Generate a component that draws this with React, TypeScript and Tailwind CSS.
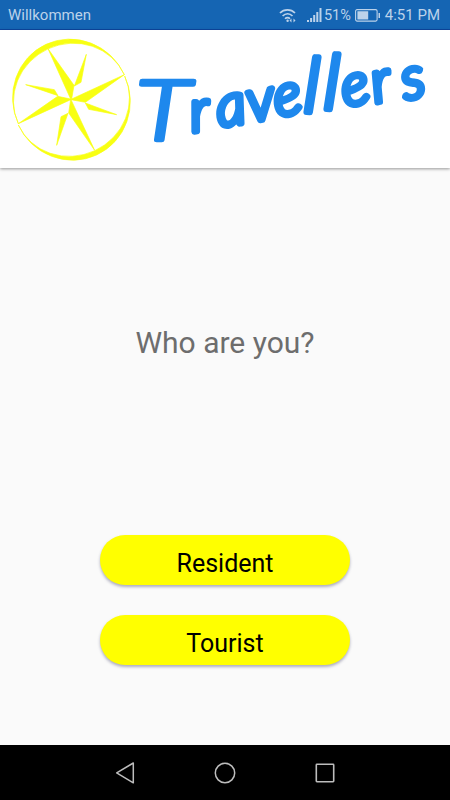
const roles = ["Resident", "Tourist"];

function StatusBar() {
    return (
        <div className="flex h-[30px] items-center border-b border-[#0d47a1] bg-[#1565b3] pt-[2px] pl-2 pr-[10px] text-[15px] text-[#bcd2ea]">
            <span className="mr-auto">Willkommen</span>
            <svg className="mr-[10px] mt-px" width="18" height="16" viewBox="0 0 18 16" fill="none" stroke="currentColor">
                <path d="M1 5C5 .8 12 .8 16 5" strokeWidth="1.7" />
                <path d="M3.6 8C6.5 5 10.8 5 13.5 8" strokeWidth="1.7" />
                <path d="M6 10.8C7.6 9.2 9.5 9.2 11 10.8" strokeWidth="1.6" />
                <circle cx="8.6" cy="12.8" r="1.2" fill="currentColor" stroke="none" />
                <path d="M10.5 12.5l2-2v4zM16.5 12.5l-2-2v4z" fill="currentColor" stroke="none" />
            </svg>
            <svg className="mr-[2px]" width="15" height="15" viewBox="0 0 15 15" fill="currentColor">
                <path d="M0 12h2v2H0zM3.1 10h2v4h-2zM6.2 7h2v7h-2zM9.3 4h2v10h-2zM12.5 0h2v14h-2z" />
            </svg>
            <span className="text-[14.5px]">51%</span>
            <svg className="ml-[4px] mr-[4px]" width="26" height="13" viewBox="0 0 26 13" fill="none">
                <rect x=".6" y=".6" width="21.5" height="11.5" rx="1.5" stroke="currentColor" strokeWidth="1.1" />
                <path d="M2.4 2.2h10.8v8.4H2.4zM23.5 4h1.5v5h-1.5z" fill="currentColor" />
            </svg>
            <span>4:51 PM</span>
        </div>
    );
}

function Compass() {
    return (
        <svg width="135" height="138" viewBox="0 0 405 414" fill="#f8ff12" stroke="#f8ff12" strokeWidth="2" strokeLinejoin="round">
            {/* two crescents form the ring */}
            <path d="M373 134A100 103.5 -24.8 0 0 55 281A100 95 -24.8 0 1 373 134Z" />
            <path d="M55 285A100 102.5 -24.8 0 0 374 138A100 94.5 -24.8 0 1 55 285Z" />
            <path d="M144 56L222 166L215 207L373 134L256 217L213 209L284 361L206 249L212 209L55 281L173 199L212 207Z" />
            <path d="M259 73L243 157L223 168ZM77 164L163 179L174 197ZM256 219L350 254L266 238ZM183 260L204 250L170 346Z" />
        </svg>
    );
}

function Wordmark() {
    return (
        <svg
            width="315"
            height="138"
            viewBox="135 30 315 138"
            className="font-['Lato','Liberation_Sans',sans-serif] font-light italic"
            fill="#1e88ed"
            stroke="#1e88ed"
            strokeWidth="6"
            strokeLinejoin="round"
            strokeLinecap="round"
        >
            <text fontSize="59">
                <tspan x="136" y="140" fontSize="82" strokeWidth="4.5" textLength="54" lengthAdjust="spacingAndGlyphs">T</tspan>
                <tspan
                    x="192 219 250 277"
                    y="132 127 122 117"
                    rotate="-7 -9 -10 -11"
                >rave</tspan>
                <tspan x="303 323" y="112 109" rotate="2 2" fontSize="76">ll</tspan>
                <tspan x="345 375 405" y="107 103 100" rotate="-12 -12 -12">ers</tspan>
            </text>
        </svg>
    );
}

function NavBar() {
    return (
        <div className="flex h-[55px] items-center justify-center gap-[76px] bg-black text-[#bdbdbd]">
            <svg width="24" height="24" viewBox="0 0 24 24" fill="none" stroke="currentColor" strokeWidth="1.5" strokeLinejoin="round">
                <path d="M20.3 2L3.7 11.9L20.3 21.8Z" />
            </svg>
            <svg width="24" height="24" viewBox="0 0 24 24" fill="none" stroke="currentColor" strokeWidth="1.5">
                <circle cx="12" cy="12" r="9.7" />
            </svg>
            <svg width="24" height="24" viewBox="0 0 24 24" fill="none" stroke="currentColor" strokeWidth="1.6">
                <rect x="3.3" y="3.3" width="17.4" height="17.4" rx=".6" />
            </svg>
        </div>
    );
}

function App() {
    return (
        <div className="flex h-[800px] w-[450px] flex-col overflow-hidden bg-[#fafafa] font-['Roboto','Liberation_Sans',sans-serif]">
            <StatusBar />
            <header className="flex h-[138px] shrink-0 bg-white shadow-[0_1px_3px_rgba(0,0,0,0.4)]">
                <Compass />
                <Wordmark />
            </header>
            <main className="flex flex-1 flex-col items-center">
                <h1 className="mt-[155px] text-[30px] leading-10 text-[#6d6d6d]">Who are you?</h1>
                <div className="mt-[172px] flex flex-col gap-[30px]">
                    {roles.map((role) => (
                        <button
                            key={role}
                            className="h-[50px] w-[250px] rounded-full bg-[#ffff00] pt-[6px] text-[25px] leading-none text-black shadow-[0_2px_3px_rgba(60,60,100,0.4)]"
                        >
                            {role}
                        </button>
                    ))}
                </div>
            </main>
            <NavBar />
        </div>
    );
}

export default App;
